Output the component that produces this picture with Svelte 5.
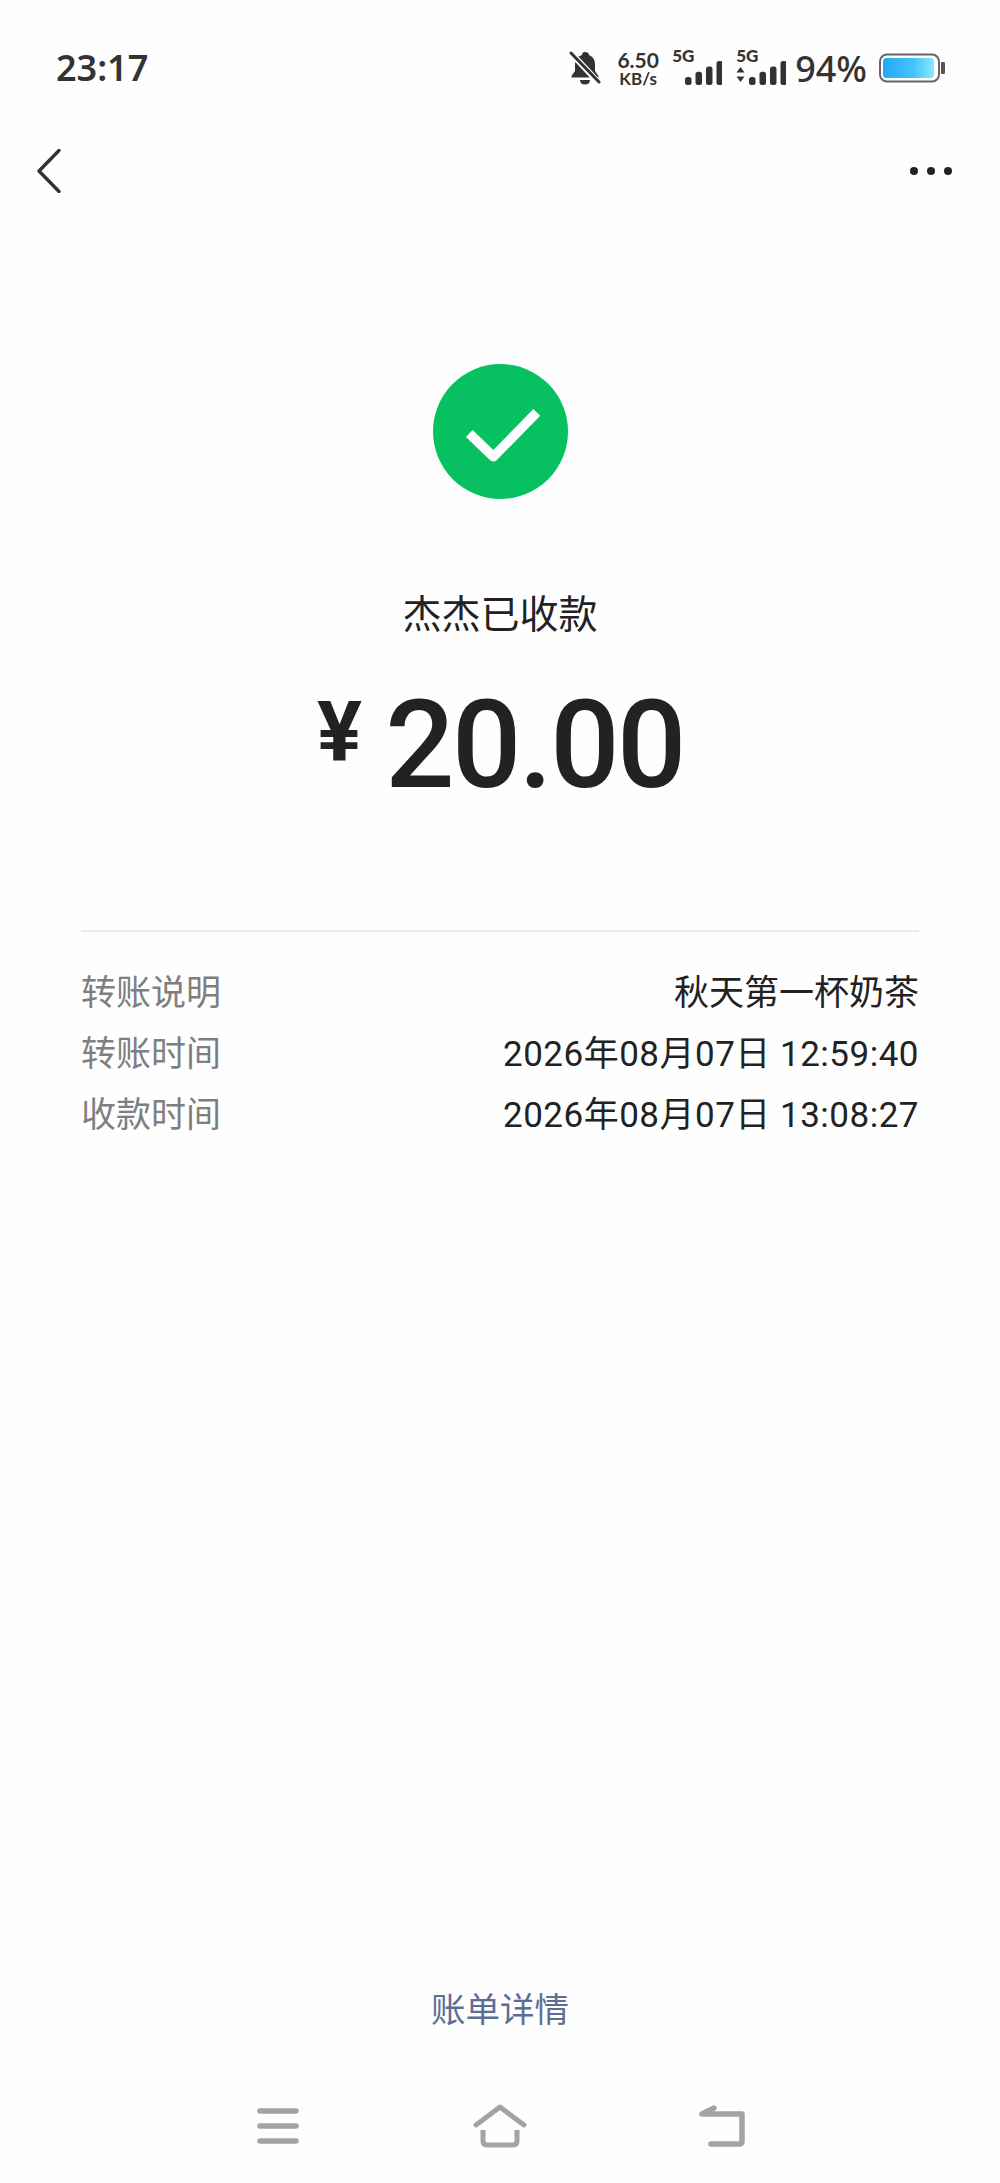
<script>
    const rows = [
        { label: "转账说明", value: "秋天第一杯奶茶", date: false },
        { label: "转账时间", value: "2026年08月07日 12:59:40", date: true },
        { label: "收款时间", value: "2026年08月07日 13:08:27", date: true },
    ];
    const bars = [0, 1, 2, 3];
</script>

<div class="page">
    <header class="status">
        <span class="time">23:17</span>
        <div class="indicators">
            <svg class="bell" width="32" height="34" viewBox="0 0 32 34">
                <path d="M16 1c-2 0-3 1.300-3 3-5 1.500-7 5-7 10v6l-3.500 5v1.500h27V25L26 20v-6c0-5-2-8.500-6-10 0-1.700-2-3-4-3z" fill="#333" />
                <path d="M11 29h10c0 3-2 4.500-5 4.500s-5-1.500-5-4.500z" fill="#333" />
                <path d="M2 2l28 30" stroke="#fff" stroke-width="6" />
                <path d="M2 2l28 29" stroke="#333" stroke-width="3" stroke-linecap="round" />
            </svg>
            <div class="speed">
                <span class="num">6.50</span>
                <span class="unit">KB/s</span>
            </div>
            <div class="signal first">
                <span class="gen">5G</span>
                <svg width="37" height="24" viewBox="0 0 37 24">
                    {#each bars as b}
                        <rect x={b * 10.500} y={16 - b * 5.300} width="6.500" height={8 + b * 5.300} rx="2.500" fill="#333" />
                    {/each}
                </svg>
            </div>
            <div class="signal">
                <span class="gen">5G</span>
                <svg width="50" height="24" viewBox="0 0 50 24">
                    <path d="M4.500 6l4 5.500h-8zM4.500 21l4-5.500h-8z" fill="#333" />
                    {#each bars as b}
                        <rect x={13 + b * 10.500} y={16 - b * 5.300} width="6.500" height={8 + b * 5.300} rx="2.500" fill="#333" />
                    {/each}
                </svg>
            </div>
            <span class="percent">94%</span>
            <svg class="battery" width="67" height="30" viewBox="0 0 67 30">
                <defs>
                    <linearGradient id="charge" x1="0" x2="1" y1="0" y2="0">
                        <stop offset="0" stop-color="#22a9f5" />
                        <stop offset="0.6" stop-color="#45c4fb" />
                        <stop offset="1" stop-color="#8ce8fc" />
                    </linearGradient>
                </defs>
                <rect x="1" y="1.500" width="59" height="27" rx="7" fill="#fff" stroke="#666" stroke-width="2" />
                <rect x="4" y="5" width="51" height="20" rx="3.500" fill="url(#charge)" />
                <rect x="62" y="9" width="4" height="12" rx="1" fill="#555" />
            </svg>
        </div>
    </header>

    <div class="topbar">
        <svg width="24" height="44" viewBox="0 0 24 44">
            <path d="M22 1.500L2 22l20 20.500" fill="none" stroke="#333" stroke-width="3.400" stroke-linecap="round" stroke-linejoin="round" />
        </svg>
        <div class="dots"><i></i><i></i><i></i></div>
    </div>

    <main class="hero">
        <svg class="check" width="135" height="135" viewBox="0 0 134 134">
            <circle cx="67" cy="67" r="67" fill="#07c160" />
            <path d="M36 69l24 23 43-44" fill="none" stroke="#fff" stroke-width="9.500" stroke-linejoin="round" />
        </svg>
        <div class="title">杰杰已收款</div>
        <div class="amount">
            <span class="yen">¥</span>
            <span class="digits">20.00</span>
        </div>
    </main>

    <section class="details">
        {#each rows as row}
            <div class="row">
                <span class="label">{row.label}</span>
                <span class="value" class:date={row.date}>{row.value}</span>
            </div>
        {/each}
    </section>

    <footer class="footer">
        <div class="link">账单详情</div>
        <nav class="nav">
            <svg width="42" height="36" viewBox="0 0 42 36">
                <path d="M3 3h36M3 18h36M3 33h36" stroke="#a3a3a3" stroke-width="5.500" stroke-linecap="round" />
            </svg>
            <svg width="54" height="44" viewBox="0 0 54 44">
                <path d="M3 21L27 3l24 18" fill="none" stroke="#a3a3a3" stroke-width="5" stroke-linecap="round" stroke-linejoin="round" />
                <path d="M10 26v11q0 4 4 4h26q4 0 4-4V26" fill="none" stroke="#a3a3a3" stroke-width="5" />
            </svg>
            <svg width="46" height="42" viewBox="0 0 46 42">
                <path d="M3 9L15 3M3 9h40v27q0 3-3 3H12" fill="none" stroke="#a3a3a3" stroke-width="5.500" stroke-linecap="round" stroke-linejoin="round" />
            </svg>
        </nav>
    </footer>
</div>

<style>
    :global(body) {
        background: #fff;
    }
    .page {
        height: 2183px;
        display: flex;
        flex-direction: column;
        background: #fefefe;
        color: #222;
        font-family: Roboto, "Noto Sans CJK SC", sans-serif;
    }
    .status {
        height: 136px;
        box-sizing: border-box;
        padding: 0 54px 0 56px;
        display: flex;
        align-items: center;
        justify-content: space-between;
        color: #333;
    }
    .time {
        font-size: 36px;
        font-weight: 600;
        line-height: 40px;
        font-family: "Noto Sans", sans-serif;
    }
    .indicators {
        display: flex;
        align-items: center;
        font-family: Lato, sans-serif;
    }
    .speed {
        margin-left: 15px;
        width: 44px;
        display: flex;
        flex-direction: column;
        align-items: center;
        font-weight: 700;
    }
    .num {
        font-size: 21px;
        line-height: 21px;
    }
    .unit {
        font-size: 17px;
        line-height: 18px;
    }
    .signal {
        position: relative;
        height: 34px;
        display: flex;
        align-items: flex-end;
        margin-left: 14px;
    }
    .signal.first {
        margin-left: 12px;
        padding-left: 13px;
    }
    .gen {
        position: absolute;
        left: 0;
        top: -4px;
        font-size: 17px;
        line-height: 18px;
        font-weight: 900;
    }
    .percent {
        margin-left: 9px;
        font-size: 36px;
        font-weight: 500;
        font-family: "Noto Sans", sans-serif;
    }
    .battery {
        margin-left: 12px;
    }
    .topbar {
        height: 70px;
        padding: 0 48px 0 37px;
        display: flex;
        align-items: center;
        justify-content: space-between;
    }
    .dots {
        display: flex;
        gap: 9px;
    }
    .dots i {
        width: 8px;
        height: 8px;
        border-radius: 50%;
        background: #222;
    }
    .hero {
        padding-top: 158px;
        display: flex;
        flex-direction: column;
        align-items: center;
    }
    .check {
        display: block;
    }
    .title {
        margin-top: 87px;
        font-size: 39px;
        line-height: 50px;
        font-family: "Noto Sans CJK SC", sans-serif;
        font-weight: 400;
    }
    .amount {
        margin-top: 50px;
        height: 120px;
        display: flex;
        align-items: center;
    }
    .yen {
        font-size: 84px;
        font-weight: 700;
        font-family: Roboto, sans-serif;
        margin-right: 24px;
        position: relative;
        top: -14px;
        left: 1px;
    }
    .digits {
        font-size: 122px;
        font-weight: 550;
        line-height: 120px;
        letter-spacing: -2.500px;
    }
    .details {
        margin: 124px 81px 0;
        padding-top: 27px;
        border-top: 2px solid #eaeaea;
    }
    .row {
        height: 61px;
        display: flex;
        align-items: center;
        justify-content: space-between;
        font-size: 35px;
    }
    .label {
        color: #7f7f7f;
        font-family: "Noto Sans CJK SC", sans-serif;
    }
    .value {
        color: #222;
    }
    .value.date {
        letter-spacing: 0.500px;
    }
    .footer {
        margin-top: auto;
    }
    .link {
        height: 50px;
        line-height: 50px;
        margin-bottom: 59px;
        text-align: center;
        font-size: 34.500px;
        color: #5d6e95;
        font-family: "Noto Sans CJK SC", sans-serif;
    }
    .nav {
        height: 69px;
        padding-bottom: 23px;
        display: grid;
        grid-template-columns: repeat(3, 222px);
        justify-content: center;
        justify-items: center;
        align-items: center;
    }
</style>
